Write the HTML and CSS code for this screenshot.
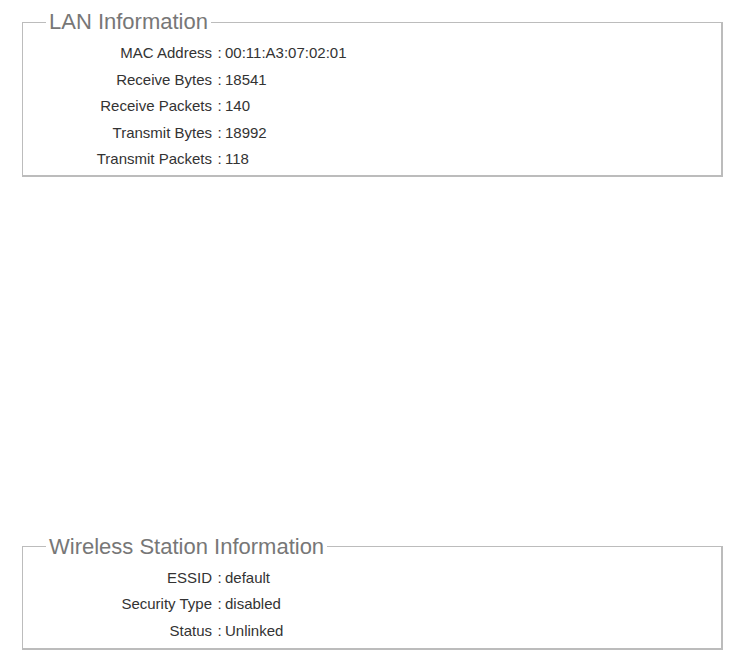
FILE: index.html
```html
<!DOCTYPE html>
<html>
<head>
<meta charset="utf-8">
<link rel="stylesheet" href="styles.css">
</head>
<body>
<fieldset class="box box-lan">
  <legend class="box-title">LAN Information</legend>
  <div class="info">
    <div class="lbl">MAC Address</div><div class="sep">:</div><div class="val">00:11:A3:07:02:01</div>
    <div class="lbl">Receive Bytes</div><div class="sep">:</div><div class="val">18541</div>
    <div class="lbl">Receive Packets</div><div class="sep">:</div><div class="val">140</div>
    <div class="lbl">Transmit Bytes</div><div class="sep">:</div><div class="val">18992</div>
    <div class="lbl">Transmit Packets</div><div class="sep">:</div><div class="val">118</div>
  </div>
</fieldset>
<fieldset class="box box-wl">
  <legend class="box-title">Wireless Station Information</legend>
  <div class="info">
    <div class="lbl">ESSID</div><div class="sep">:</div><div class="val">default</div>
    <div class="lbl">Security Type</div><div class="sep">:</div><div class="val">disabled</div>
    <div class="lbl">Status</div><div class="sep">:</div><div class="val">Unlinked</div>
  </div>
</fieldset>
</body>
</html>
```

FILE: styles.css
```css
html, body {
  margin: 0;
  padding: 0;
  background: #ffffff;
}
body {
  font-family: "Liberation Sans", Arial, sans-serif;
  padding: 0 23px 0 22px;
}
.box {
  margin: 0;
  padding: 5px 0 2px 0;
  border: 2px solid #bcbcbc;
  border-top-width: 1px;
  border-left-width: 1px;
}
.box-lan {
  margin-top: 9px;
}
.box-wl {
  margin-top: 357px;
  padding-bottom: 4px;
}
.box-title {
  margin-left: 23px;
  padding: 0 3px;
  font-size: 22px;
  color: #777777;
}
.info {
  display: grid;
  grid-template-columns: 194px 5px 1fr;
  font-size: 15px;
  line-height: 26.5px;
  color: #333333;
}
.lbl {
  text-align: right;
  padding-right: 5px;
}
.sep {
  text-align: center;
}
.val {
  padding-left: 3px;
}
```
